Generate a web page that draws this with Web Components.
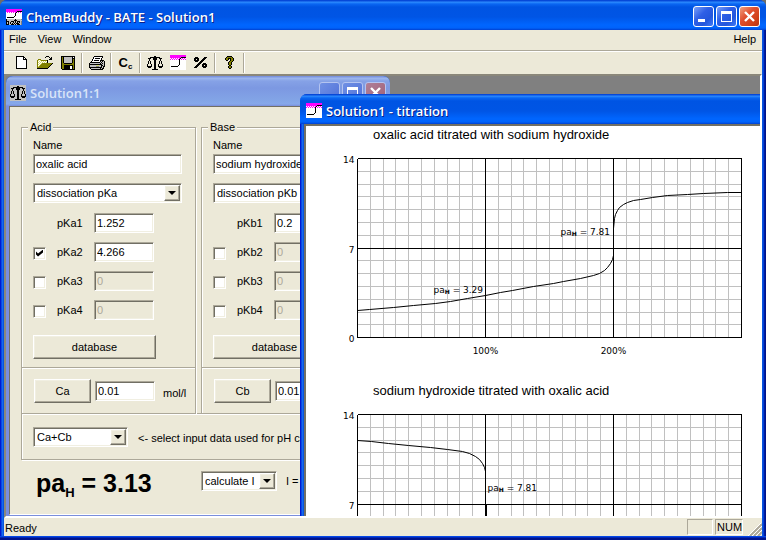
<!DOCTYPE html>
<html lang="en">
<head>
<meta charset="utf-8">
<title>ChemBuddy - BATE - Solution1</title>
<style>
  html, body {
    height: 100%;
    margin: 0;
  }

  body {
    background: #6f6d68;
    color: #000;
    font: 11px/14px "Liberation Sans", Arial, sans-serif;
    overflow: hidden;
  }

  #app {
    height: 100%;
  }

  #solution {
    position: absolute;
    left: 0;
    top: 0;
  }

  #titration {
    position: absolute;
    left: 294px;
    top: 18px;
    min-width: 600px;
  }
</style>
</head>
<body>
<xp-window id="app" heading="ChemBuddy - BATE - Solution1" icon="bate">
  <menu-bar></menu-bar>
  <tool-bar></tool-bar>
  <mdi-client>
    <xp-window id="solution" heading="Solution1:1" icon="scales" inactive child>
      <solution-form></solution-form>
    </xp-window>
    <xp-window id="titration" heading="Solution1 - titration" icon="curve" child>
      <titration-chart chart="acid" heading="oxalic acid titrated with sodium hydroxide"></titration-chart>
      <titration-chart chart="base" heading="sodium hydroxide titrated with oxalic acid"></titration-chart>
    </xp-window>
  </mdi-client>
  <status-bar></status-bar>
</xp-window>

<script>
// One character per pixel, "." is transparent
const COLORS = {
  k: "#000000",
  w: "#ffffff",
  y: "#808000",
  l: "#d8d870",
  g: "#808080",
  s: "#c0c0c0",
  m: "#ff00ff"
};

const ICONS = {
  page: [
    "kkkkkkkk...",
    "kwwwwwwkk..",
    "kwwwwwwkwk.",
    "kwwwwwwkkkk",
    "kwwwwwwwwwk",
    "kwwwwwwwwwk",
    "kwwwwwwwwwk",
    "kwwwwwwwwwk",
    "kwwwwwwwwwk",
    "kwwwwwwwwwk",
    "kwwwwwwwwwk",
    "kwwwwwwwwwk",
    "kkkkkkkkkkk"
  ],
  open: [
    ".........kkk....",
    "........k...k.k.",
    ".............kk.",
    ".yyy........kkk.",
    "ylwlyyyyyyk.....",
    "ywlwlwlwlwk.....",
    "ylwlwlwlwlk.....",
    "ywlwlyyyyyyyyyyk",
    "ylwlyyyyyyyyyyk.",
    "ywlyyyyyyyyyyk..",
    "ylyyyyyyyyyyk...",
    "yyyyyyyyyyyk....",
    "kkkkkkkkkkk....."
  ],
  save: [
    "kkkkkkkkkkkkkk",
    "kyksssssssskwk",
    "kyksssssssskkk",
    "kyksssssssskyk",
    "kyksssssssskyk",
    "kyksssssssskyk",
    "kyksssssssskyk",
    "kyykkkkkkkkyyk",
    "kyyyyyyyyyyyyk",
    "kyykkkkkkkkkyk",
    "kyykkkkkkwwkyk",
    "kyykkkkkkwwkyk",
    "kyykkkkkkwwkyk",
    ".kkkkkkkkkkkkk"
  ],
  print: [
    ".....kkkkkkkkk..",
    "....kwwwwwwwwk..",
    "....kwkkkkkwk...",
    "...kwwwwwwwwk...",
    "...kwkkkkkwkkkk.",
    "..kwwwwwwwwksksk",
    ".kkkkkkkkkkskssk",
    "kssssssssssksksk",
    "kkkkkkkkkkkkkssk",
    "ksssssslllsskksk",
    "kssssssgggsskskk",
    "kkkkkkkkkkkkksk.",
    ".kssssssssskskk.",
    "..kkkkkkkkkkkk.."
  ],
  scales: [
    ".......kk.......",
    "...kkkkkkkkkk...",
    ".kkk..kkkk..kkk.",
    "..k...kkkk...k..",
    "..k....kk....k..",
    ".k.k...kk...k.k.",
    ".k.k...kk...k.k.",
    ".k.k...kk...k.k.",
    "k...k..kk..k...k",
    "k...k..kk..k...k",
    "kkkkk..kk..kkkkk",
    ".kkk...kk...kkk.",
    ".......kk.......",
    ".....kkkkkk....."
  ],
  curve: [
    "mmmmmmmmmmmmmmmm",
    "mmmmmmmmmmmmmmmm",
    "mmmmmmmmmmmkkkkk",
    "wmwmwmwmwmkwmwmw",
    "mwmwmwmwmkwmwmwm",
    "wwwwwwwwwkwwwwww",
    "wwwwwwwwwkwwwwww",
    "wwwwwwwwwkwwwwww",
    "wwwwwwwwwkwwwwww",
    "wwwwwwwwwkwwwwww",
    "wwwwwwwwkwwwwwww",
    "wkkkkkkkwwwwwwww",
    "wwwwwwwwwwwwwwww",
    "wwwwwwwwwwwwwwww",
    "wwwwwwwwwwwwwwww"
  ],
  bate: [
    "mmmmmmmmmmmmmmmm",
    "mmmmmmmmmmmmmmmm",
    "mmmmmmmmmmmkkkkk",
    "wmwmwmwmwmkwmwmw",
    "wwwwwwwwwkwwwwww",
    "wwwwwwwwwkwwwwww",
    "wwwwwwwwwkwwwwww",
    "wwwwwwwwkwwwwwww",
    "wkkkkkkkwwwwwwww",
    "wwwwwwwwwwwwwwww",
    "kssssssssksssssg",
    "kssssssskkksssss",
    "kkksskkkskskkksg",
    "kskskssksksksksg",
    "kskskskskskkkssg",
    "kkksskkkskskkksg"
  ],
  percent: [
    ".kkk......kkk.",
    "kkkkk....kkk..",
    "kk.kk...kkk...",
    "kkkkk..kkk....",
    ".kkk..kkk.....",
    ".....kkk......",
    "....kkk..kkk..",
    "...kkk..kkkkk.",
    "..kkk...kk.kk.",
    ".kkk....kkkkk.",
    "kkk......kkk.."
  ],
  help: [
    "..kkkkk...",
    ".kyyyyyk..",
    "kyykkkyyk.",
    "kyyk.kyyk.",
    ".kk..kyyk.",
    "....kyyk..",
    "...kyyk...",
    "...kyyk...",
    "...kyyk...",
    "....kk....",
    "...kyyk...",
    "...kyyk...",
    "....kk...."
  ]
};

const SUNKEN = `
  border: 1px solid;
  border-color: #aca899 #fff #fff #aca899;
  box-shadow: inset 1px 1px #716f64, inset -1px -1px #f1efe2;
`;

const RAISED = `
  border: 1px solid;
  border-color: #fff #716f64 #716f64 #fff;
  box-shadow: inset -1px -1px #aca899, inset 1px 1px #f1efe2;
`;

const CONTROLS = `
  button, input, select {
    box-sizing: border-box;
    margin: 0;
    font: inherit;
    color: inherit;
    border-radius: 0;
  }

  button {
    ${RAISED}
    height: 24px;
    padding: 0;
    background: #ece9d8;
  }

  input[type="text"] {
    ${SUNKEN}
    height: 20px;
    padding: 0 2px;
    background: #fff;
    outline: 0;
  }

  input[type="text"]:disabled {
    background: #ece9d8;
    color: #aca899;
  }

  input[type="checkbox"] {
    ${SUNKEN}
    appearance: none;
    width: 13px;
    height: 13px;
    background: #fff;
  }

  input[type="checkbox"]:checked::before {
    content: "";
    display: block;
    width: 7px;
    height: 7px;
    margin: 2px;
    background: #000;
    clip-path: polygon(0 29%, 29% 57%, 100% 0, 100% 43%, 29% 100%, 0 71%);
  }

  .combo {
    display: flex;
    position: relative;
  }

  .combo select {
    ${SUNKEN}
    appearance: none;
    width: 100%;
    height: 20px;
    padding: 0 18px 0 3px;
    background: #fff;
  }

  .combo::after {
    ${RAISED}
    content: "";
    box-sizing: border-box;
    position: absolute;
    top: 2px;
    right: 2px;
    bottom: 2px;
    width: 16px;
    background: #ece9d8;
    pointer-events: none;
  }

  .combo::before {
    content: "";
    position: absolute;
    z-index: 1;
    top: 8px;
    right: 6px;
    border: 4px solid transparent;
    border-top-color: #000;
    border-bottom: 0;
    pointer-events: none;
  }
`;

class PixelIcon extends HTMLElement {
  constructor() {
    super();
    this.attachShadow({ mode: "open" });
  }

  connectedCallback() {
    const rows = ICONS[this.getAttribute("name")];
    let rects = "";
    rows.forEach((row, y) => {
      for (const run of row.matchAll(/([a-z])\1*/g)) {
        rects += `<rect x="${run.index}" y="${y}" width="${run[0].length}" height="1" fill="${COLORS[run[1]]}"/>`;
      }
    });

    this.shadowRoot.innerHTML = `
      <style>
        :host { display: block; }
        svg { display: block; }
      </style>
      <svg width="${rows[0].length}" height="${rows.length}" shape-rendering="crispEdges" aria-hidden="true">${rects}</svg>
    `;
  }
}

class XpWindow extends HTMLElement {
  static style = `
    <style>
      :host {
        --frame: linear-gradient(90deg, #0019cf 0 1px, #0a48e3 1px 2px, #1669ee 2px 3px, #0855dd 3px 4px);
        --frame-right: linear-gradient(270deg, #00138c 0 1px, #001ea0 1px 2px, #0441d8 2px 3px, #0855dd 3px 4px);
        --frame-bottom: linear-gradient(0deg, #00138c 0 2px, #0028b8 2px 3px, #0446e6 3px 4px);
        --bar: linear-gradient(#0648d8 0 1px, #2f8dff 2px, #0a66f2 4px, #0054e3 7px, #0055e5 17px, #0066ff 25px, #0062fa 28px, #0040d0 30px);
        --title-pad: 6px;
        display: flex;
        flex-direction: column;
        isolation: isolate;
        border-radius: 7px 7px 0 0;
        overflow: hidden;
        background: #0054e3;
      }

      :host([inactive]) {
        --frame: linear-gradient(90deg, #7a8edc, #7a8edc);
        --frame-right: var(--frame);
        --frame-bottom: linear-gradient(0deg, #5350b8 0 1px, #7a8edc 1px);
        --bar: linear-gradient(#7a93df 0 1px, #9eb8ee 2px, #86a2e6 5px, #7c98e2 12px, #82a4e6 24px, #86a8ea 28px, #7a8edc 30px);
        --title-pad: 4px;
      }

      header {
        display: flex;
        align-items: center;
        gap: 4px;
        height: 30px;
        padding: 3px 6px 0 var(--title-pad);
        box-sizing: border-box;
        flex: none;
        background: var(--bar);
      }

      h1 {
        flex: 1;
        margin: 0;
        padding-top: 1px;
        font: 600 13px/20px "Open Sans", "Noto Sans", sans-serif;
        color: #fff;
        text-shadow: 1px 1px #0a1f88;
        white-space: nowrap;
      }

      :host([inactive]) h1 {
        color: #d8e4f8;
        text-shadow: none;
      }

      :host([inactive]) header pixel-icon {
        background: #c0c0c0;
        padding: 1px 0;
      }

      .buttons {
        display: flex;
        gap: 2px;
      }

      :host([inactive]) .buttons {
        margin-right: -2px;
      }

      button {
        width: 21px;
        height: 21px;
        padding: 0;
        border: 1px solid #fff;
        border-radius: 3px;
        background: linear-gradient(135deg, #7aa0f8, #2f5fe6 40%, #2456dc 70%, #3f7af8);
      }

      button.close {
        background: linear-gradient(135deg, #f0a080, #e05030 40%, #d04018 75%, #b83410);
      }

      :host([inactive]) button {
        border-color: #b4c4f0;
        background: linear-gradient(135deg, #7090e4, #5070d8);
      }

      :host([inactive]) button.close {
        background: linear-gradient(135deg, #b08098, #a06078);
      }

      svg { display: block; }

      .frame {
        display: flex;
        flex: 1;
        min-height: 0;
        padding: 0 4px 4px;
        background:
          var(--frame-bottom) bottom / 100% 4px no-repeat,
          var(--frame) left / 4px 100% no-repeat,
          var(--frame-right) right / 4px 100% no-repeat;
      }

      .body {
        display: flex;
        flex-direction: column;
        flex: 1;
        min-width: 0;
        min-height: 0;
        background: #ece9d8;
      }

      :host([child]) .body {
        border: 1px solid;
        border-color: #716f64 #fff #fff #716f64;
      }

      :host([child]:not([inactive])) .body {
        border-width: 2px;
        background: #fff;
      }

      :host([inactive]) .frame {
        padding: 0 3px 3px;
      }
    </style>
  `;

  constructor() {
    super();
    this.attachShadow({ mode: "open" });
  }

  connectedCallback() {
    this.shadowRoot.innerHTML = XpWindow.style + `
      <header>
        <pixel-icon name="${this.getAttribute("icon")}"></pixel-icon>
        <h1>${this.getAttribute("heading")}</h1>
        <div class="buttons">
          <button type="button" aria-label="Minimize">
            <svg width="19" height="19"><path d="M4 12h7v3H4z" fill="#fff"/></svg>
          </button>
          <button type="button" aria-label="Maximize">
            <svg width="19" height="19"><path d="M4 4h11v11H4zM5 7v7h9V7z" fill="#fff" fill-rule="evenodd"/></svg>
          </button>
          <button type="button" class="close" aria-label="Close">
            <svg width="19" height="19"><path d="M5 5l9 9M14 5l-9 9" stroke="#fff" stroke-width="2.4"/></svg>
          </button>
        </div>
      </header>
      <div class="frame"><div class="body"><slot></slot></div></div>
    `;
  }
}

class MenuBar extends HTMLElement {
  constructor() {
    super();
    this.attachShadow({ mode: "open" });
    this.shadowRoot.innerHTML = `
      <style>
        :host {
          display: block;
          flex: none;
          border-bottom: 1px solid #aca899;
        }

        nav {
          display: flex;
          gap: 11px;
          height: 20px;
          padding: 0 6px 0 5px;
          align-items: center;
        }

        button {
          padding: 0 0 2px;
          border: 0;
          background: none;
          font: inherit;
          color: inherit;
        }

        .help { margin-left: auto; }
      </style>
      <nav>
        <button type="button">File</button>
        <button type="button">View</button>
        <button type="button">Window</button>
        <button type="button" class="help">Help</button>
      </nav>
    `;
  }
}

class ToolBar extends HTMLElement {
  static groups = [
    [["page", "New"], ["open", "Open"], ["save", "Save"]],
    [["print", "Print"]],
    [["", "Concentrations"]],
    [["scales", "Solution"], ["curve", "Titration"], ["percent", "Percent"]],
    [["help", "Help"]]
  ];

  constructor() {
    super();
    this.attachShadow({ mode: "open" });
    this.shadowRoot.innerHTML = `
      <style>
        :host {
          display: flex;
          flex: none;
          height: 23px;
          padding-left: 3px;
          border-top: 1px solid #fff;
          box-sizing: border-box;
        }

        .group {
          display: flex;
          border-right: 1px solid #aca899;
          box-shadow: 1px 0 #fff;
          margin: 1px 0;
          padding: 0 2px 0 3px;
        }

        .group:first-child {
          border-left: 1px solid #aca899;
          box-shadow: 1px 0 #fff, inset 1px 0 #fff;
        }

        button {
          display: flex;
          align-items: center;
          justify-content: center;
          width: 23px;
          padding: 0 0 1px;
          border: 0;
          background: none;
          font: bold 13px/16px "Liberation Sans", Arial, sans-serif;
        }

        sub {
          font-size: 8px;
          line-height: 8px;
          align-self: flex-end;
          padding-bottom: 1px;
        }
      </style>
    ` + ToolBar.groups.map(group => `<div class="group">${group.map(([icon, label]) => `
      <button type="button" aria-label="${label}">${icon ? `<pixel-icon name="${icon}"></pixel-icon>` : "C<sub>c</sub>"}</button>
    `).join("")}</div>`).join("");
  }
}

class MdiClient extends HTMLElement {
  constructor() {
    super();
    this.attachShadow({ mode: "open" });
    this.shadowRoot.innerHTML = `
      <style>
        :host {
          display: block;
          position: relative;
          flex: 1;
          min-height: 0;
          overflow: hidden;
          background: #808080;
          border: 2px solid;
          border-color: #8a877a #fff #fff #8a877a;
        }
      </style>
      <slot></slot>
    `;
  }
}

class StatusBar extends HTMLElement {
  constructor() {
    super();
    this.attachShadow({ mode: "open" });
    this.shadowRoot.innerHTML = `
      <style>
        :host {
          display: flex;
          flex: none;
          gap: 2px;
          height: 18px;
          align-items: center;
        }

        .message {
          flex: 1;
          padding: 2px 0 0 1px;
        }

        .pane {
          width: 26px;
          height: 16px;
          padding-left: 1px;
          box-sizing: border-box;
          border: 1px solid;
          border-color: #aca899 #fff #fff #aca899;
          line-height: 15px;
        }

        .pane.num { width: 28px; }

        svg {
          align-self: flex-end;
          margin-left: 3px;
        }
      </style>
      <span class="message">Ready</span>
      <span class="pane"></span>
      <span class="pane num">NUM</span>
      <svg width="14" height="13" aria-hidden="true">
        <path d="M2 13L14 1M6 13l8-8M10 13l4-4" stroke="#aca899" stroke-width="2"/>
        <path d="M0 13L13 0M4 13L14 3M8 13l6-6" stroke="#fff"/>
      </svg>
    `;
  }
}

class SpeciesGroup extends HTMLElement {
  static style = `
    <style>
      ${CONTROLS}

      :host { display: block; }

      fieldset, .amount {
        border: 1px solid #aca899;
        box-shadow: 1px 1px #fff, inset 1px 1px #fff;
        box-sizing: border-box;
        margin: 0;
        min-width: 0;
      }

      fieldset { padding: 4px 11px 8px; }

      legend {
        margin-left: -5px;
        padding: 0 2px;
        background: #ece9d8;
      }

      .name {
        display: flex;
        flex-direction: column;
        gap: 2px;
        padding-bottom: 9px;
      }

      .name input { width: 149px; }

      .combo { width: 149px; }

      .constants {
        display: grid;
        grid-template-columns: 24px 37px 60px;
        gap: 9px 0;
        align-items: center;
        padding: 10px 0 15px;
      }

      .constants label { grid-column: 2; }

      .constants input[type="checkbox"] {
        grid-column: 1;
        margin-top: 2px;
      }

      .database { width: 123px; }

      .amount {
        display: flex;
        align-items: center;
        gap: 4px;
        margin-top: -1px;
        padding: 11px 0 10px 12px;
        white-space: nowrap;
      }

      .amount button { width: 57px; }

      .amount input { width: 60px; }

      .amount span { padding: 4px 0 0 4px; }
    </style>
  `;

  constructor() {
    super();
    this.attachShadow({ mode: "open" });
  }

  connectedCallback() {
    const letter = this.getAttribute("letter");
    const values = this.getAttribute("values").split(" ");
    const enabled = Number(this.getAttribute("enabled"));

    const rows = values.map((value, i) => {
      const n = i + 1;
      const on = n <= enabled;
      if (n === 1) {
        return `
          <label for="value1">pK${letter}1</label>
          <input type="text" id="value1" value="${value}">
        `;
      }
      return `
        <input type="checkbox" id="use${n}"${on ? " checked" : ""}>
        <label for="use${n}" id="label${n}">pK${letter}${n}</label>
        <input type="text" aria-labelledby="label${n}" value="${value}"${on ? "" : " disabled"}>
      `;
    }).join("");

    this.shadowRoot.innerHTML = SpeciesGroup.style + `
      <fieldset>
        <legend>${this.getAttribute("heading")}</legend>
        <div class="name">
          <label for="name">Name</label>
          <input type="text" id="name" value="${this.getAttribute("species")}">
        </div>
        <div class="combo">
          <select aria-label="Constant type"><option>dissociation pK${letter}</option></select>
        </div>
        <div class="constants">${rows}</div>
        <button type="button" class="database">database</button>
      </fieldset>
      <div class="amount">
        <button type="button" id="amount">C${letter}</button>
        <input type="text" aria-labelledby="amount" value="0.01">
        <span>mol/l</span>
      </div>
    `;
  }
}

class SolutionForm extends HTMLElement {
  constructor() {
    super();
    this.attachShadow({ mode: "open" });
    this.shadowRoot.innerHTML = `
      <style>
        ${CONTROLS}

        :host {
          display: block;
          padding: 13px 10px 14px 11px;
        }

        .species {
          display: grid;
          grid-template-columns: 175px 175px;
          gap: 5px;
        }

        .source {
          display: flex;
          align-items: center;
          gap: 10px;
          margin-top: -1px;
          padding: 13px 11px 12px;
          border: 1px solid #aca899;
          box-shadow: 1px 1px #fff, inset 1px 1px #fff;
          white-space: nowrap;
        }

        .source .combo { width: 95px; }

        .source label { padding-top: 2px; }

        .result {
          display: grid;
          grid-template-columns: 165px 76px auto 1fr;
          gap: 0 9px;
          align-items: center;
          padding: 2px 0 0 6px;
        }

        output {
          padding: 5px 0 0 9px;
          font-size: 25px;
          font-weight: bold;
          line-height: 32px;
          white-space: nowrap;
        }

        sub {
          font-size: 13px;
          line-height: 14px;
          vertical-align: -5px;
        }

        .result input { width: 60px; }
      </style>
      <div class="species">
        <species-group heading="Acid" letter="a" species="oxalic acid" values="1.252 4.266 0 0" enabled="2"></species-group>
        <species-group heading="Base" letter="b" species="sodium hydroxide" values="0.2 0 0 0" enabled="1"></species-group>
      </div>
      <div class="source">
        <div class="combo"><select id="source"><option>Ca+Cb</option></select></div>
        <label for="source">&lt;- select input data used for pH calculation</label>
      </div>
      <div class="result">
        <output>pa<sub>H</sub> = 3.13</output>
        <div class="combo"><select aria-label="Ionic strength"><option>calculate I</option></select></div>
        <label for="strength">I =</label>
        <input type="text" id="strength">
      </div>
    `;
  }
}

class TitrationChart extends HTMLElement {
  static charts = {
    acid: {
      curves: [
        "0,152 12,151 36,149 56,147 78,145 93,143 110,140 128,137 143,134 155,132 176,128 196,125 206,123 223,120 236,117 242,115 247,112 250,109 253,105 255,101 256,97 256,90",
        "256,84 256,70 257,60 258,56 260,52 262,49 266,46 270,44 276,42 283,41 295,39 310,37 330,36 346,35 370,34 384,34"
      ],
      labels: [["3.29", 76, 134], ["7.81", 203, 76]]
    },
    base: {
      curves: [
        "0,26 14,27 31,29 51,31 73,33 90,35 105,37 112,39 118,42 122,45 125,49 127,53 128,57",
        "129,90 129,179"
      ],
      labels: [["7.81", 130, 76]]
    }
  };

  constructor() {
    super();
    this.attachShadow({ mode: "open" });
  }

  connectedCallback() {
    const { curves, labels } = TitrationChart.charts[this.getAttribute("chart")];
    const step = 12.8;
    let minor = "";
    let major = "";

    for (let i = 0; i <= 30; i++) {
      const line = `M${Math.round(i * step)} 0V179`;
      i % 10 ? minor += line : major += line;
    }
    for (let i = 0; i <= 14; i++) {
      const line = `M0 ${Math.round(i * step)}H384`;
      i % 7 ? minor += line : major += line;
    }

    this.shadowRoot.innerHTML = `
      <style>
        :host {
          display: block;
          padding: 1px 0 17px 34px;
        }

        h2 {
          margin: 0 0 7px 33px;
          font-size: 13px;
          font-weight: normal;
          line-height: 16px;
        }

        svg {
          display: block;
          font: 9px "DejaVu Sans", Verdana, sans-serif;
        }
      </style>
      <h2>${this.getAttribute("heading")}</h2>
      <svg width="410" height="215">
        <g transform="translate(17.5 8.5)">
          <g fill="none" shape-rendering="crispEdges">
            <path d="${minor}" stroke="#c0c0c0"/>
            <path d="${major}" stroke="#000"/>
          </g>
          <g fill="none" stroke="#000">${curves.map(points => `<polyline points="${points}"/>`).join("")}</g>
          <g text-anchor="end">
            <text x="-3" y="4">14</text>
            <text x="-3" y="94">7</text>
            <text x="-3" y="183">0</text>
          </g>
          <g text-anchor="middle">
            <text x="128" y="195">100%</text>
            <text x="256" y="195">200%</text>
          </g>
          ${labels.map(([value, x, y]) => `
            <text x="${x}" y="${y}">pa<tspan font-size="6" font-weight="bold" dy="1">H</tspan><tspan dy="-1"> = ${value}</tspan></text>
          `).join("")}
        </g>
      </svg>
    `;
  }
}

customElements.define("pixel-icon", PixelIcon);
customElements.define("xp-window", XpWindow);
customElements.define("menu-bar", MenuBar);
customElements.define("tool-bar", ToolBar);
customElements.define("mdi-client", MdiClient);
customElements.define("status-bar", StatusBar);
customElements.define("species-group", SpeciesGroup);
customElements.define("solution-form", SolutionForm);
customElements.define("titration-chart", TitrationChart);
</script>
</body>
</html>
